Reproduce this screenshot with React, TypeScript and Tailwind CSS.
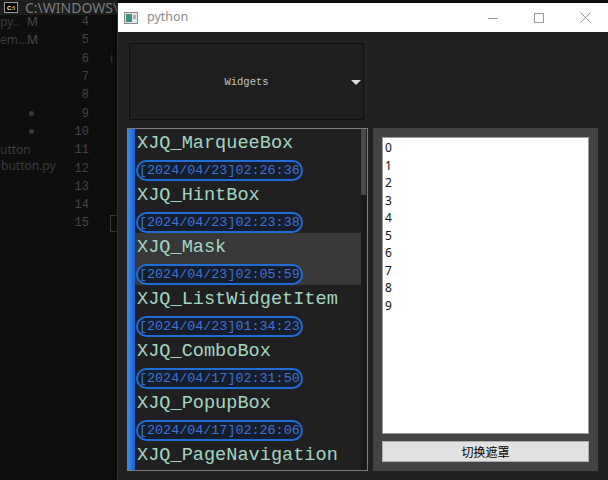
import React from 'react';

const items = [
  { name: 'XJQ_MarqueeBox', time: '[2024/04/23]02:26:36' },
  { name: 'XJQ_HintBox', time: '[2024/04/23]02:23:38' },
  { name: 'XJQ_Mask', time: '[2024/04/23]02:05:59', hover: true },
  { name: 'XJQ_ListWidgetItem', time: '[2024/04/23]01:34:23' },
  { name: 'XJQ_ComboBox', time: '[2024/04/17]02:31:50' },
  { name: 'XJQ_PopupBox', time: '[2024/04/17]02:26:06' },
  { name: 'XJQ_PageNavigation' },
];

const lineNumbers = [4, 5, 6, 7, 8, 9, 10, 11, 12, 13, 14, 15];

// explorer side text, keyed by line number
const explorer: Record<number, React.ReactNode> = {
  4: (
    <>
      <span className="w-[27px]">py..</span>
      <span className="text-[#4a4a4a]">M</span>
    </>
  ),
  5: (
    <>
      <span className="w-[27px]">em...</span>
      <span className="text-[#4a4a4a]">M</span>
    </>
  ),
  9: <span className="ml-[29px] w-[5px] h-[5px] rounded-full bg-[#3a3a3a]" />,
  10: <span className="ml-[29px] w-[5px] h-[5px] rounded-full bg-[#3a3a3a]" />,
  11: <span>utton</span>,
  12: <span className="-mt-[6px] pl-[1px]">button.py</span>,
};

const Background = () => (
  <div className="absolute inset-0 bg-[#0e0e0e]">
    <div className="flex pt-[13px]">
      <div className="w-[60px] flex flex-col text-[12px] leading-none text-[#3c3c3c]" style={{ fontFamily: '"Noto Sans", sans-serif' }}>
        {lineNumbers.map((n) => (
          <div key={n} className="h-[18.3px] flex items-center overflow-hidden whitespace-nowrap">
            {explorer[n]}
          </div>
        ))}
      </div>
      <div className="w-[29px] flex flex-col text-[12px] leading-none text-[#444444]" style={{ fontFamily: '"Liberation Mono", monospace' }}>
        {lineNumbers.map((n) => (
          <div key={n} className="h-[18.3px] flex items-center justify-end">{n}</div>
        ))}
      </div>
      <div className="flex flex-col pl-[21px]">
        {lineNumbers.map((n) => (
          <div key={n} className="h-[18.3px] flex items-center text-[12px] text-[#3a3a3a]">
            {n === 6 ? 'i' : n === 15 ? <span className="w-[10px] h-[17px] border border-[#3a3a3a]" /> : ''}
          </div>
        ))}
      </div>
    </div>
    <div className="absolute left-0 top-0 w-[117px] h-[15px] bg-[#1e1e1e] flex items-center gap-[7px] pl-[4px] overflow-hidden">
      <div className="shrink-0 w-[14px] h-[11px] border border-[#9a9a9a] bg-black flex items-center justify-center text-[6px] leading-none text-white font-bold" style={{ fontFamily: '"Liberation Sans", sans-serif' }}>
        C:\
      </div>
      <span className="text-[14px] leading-none text-[#7c7c7c] whitespace-nowrap" style={{ fontFamily: '"Noto Sans", sans-serif' }}>
        C:\WINDOWS\sy
      </span>
    </div>
  </div>
);

const TitleBar = () => (
  <div className="h-[29px] bg-white flex items-center" style={{ fontFamily: '"Noto Sans", sans-serif' }}>
    <svg width="14" height="12" viewBox="0 0 14 12" className="ml-[6px]">
      <rect x="0.5" y="0.5" width="13" height="11" fill="#e8e8e8" stroke="#8a8a8a" />
      <rect x="2" y="2" width="6" height="8" fill="#3f8f80" />
      <rect x="9" y="3" width="3" height="4" fill="#b0b0b0" />
    </svg>
    <span className="ml-[9px] text-[12.5px] text-[#8c8c8c]">python</span>
    <div className="ml-auto flex h-full">
      <div className="w-[46px] flex items-center justify-center">
        <svg width="10" height="10" viewBox="0 0 10 10">
          <line x1="0" y1="5.5" x2="10" y2="5.5" stroke="#9a9a9a" strokeWidth="1" />
        </svg>
      </div>
      <div className="w-[46px] flex items-center justify-center">
        <svg width="10" height="10" viewBox="0 0 10 10">
          <rect x="0.5" y="0.5" width="9" height="9" fill="none" stroke="#9a9a9a" strokeWidth="1" />
        </svg>
      </div>
      <div className="w-[46px] flex items-center justify-center">
        <svg width="11" height="11" viewBox="0 0 11 11">
          <path d="M0.5 0.5 L10.5 10.5 M10.5 0.5 L0.5 10.5" stroke="#9a9a9a" strokeWidth="1" />
        </svg>
      </div>
    </div>
  </div>
);

const ListItem = ({ name, time, hover }: { name: string; time?: string; hover?: boolean }) => (
  <div className={`h-[52px] shrink-0 flex flex-col ${hover ? 'bg-[#383838]' : ''}`}>
    <div className="h-[31px] pl-[2px] flex items-center text-[18.6px] leading-none text-[#a2d6c3] whitespace-nowrap">
      {name}
    </div>
    {time && (
      <div className="self-start ml-[1px] h-[21px] px-[1px] flex items-center rounded-full border-2 border-[#1e6cd6] bg-[#161d2b] text-[13.4px] leading-none text-[#3d74d6] whitespace-nowrap">
        {time}
      </div>
    )}
  </div>
);

const App: React.FC = () => {
  return (
    <div className="relative w-[608px] h-[480px] overflow-hidden">
      <Background />
      <div className="absolute left-[117px] top-[3px] w-[491px] h-[477px] flex flex-col border-l border-[#2e2e2e] shadow-[0_0_6px_rgba(0,0,0,0.6)]">
        <TitleBar />
        <div className="flex-1 bg-[#212121] pl-[9px] pt-[11px] flex flex-col gap-[8px]">
          <div className="ml-[2px] w-[235px] h-[77px] pt-[3px] bg-[#1e1e1e] border border-[#0f0f0f] relative flex items-center justify-center">
            <span className="text-[10.5px] text-[#c4c4c4]" style={{ fontFamily: '"Liberation Mono", monospace' }}>
              Widgets
            </span>
            <svg width="10" height="6" viewBox="0 0 10 6" className="absolute right-[2px] top-[36px]">
              <path d="M0 0 L10 0 L5 5 Z" fill="#dcdcdc" />
            </svg>
          </div>
          <div className="flex gap-[5px]">
            <div className="w-[241px] h-[343px] border border-[#7c7c7c] bg-[#202020] flex" style={{ fontFamily: '"Liberation Mono", monospace' }}>
              <div className="w-[7px] bg-gradient-to-r from-[#3d8ae6] to-[#1560d2]" />
              <div className="flex-1 flex flex-col overflow-hidden">
                {items.map((it) => (
                  <ListItem key={it.name} {...it} />
                ))}
              </div>
              <div className="w-[6px] bg-[#1a1a1a] flex flex-col">
                <div className="h-[66px] bg-[#4a4a4a] mr-[1px]" />
              </div>
            </div>
            <div className="w-[225px] h-[343px] bg-[#434343] p-[9px] flex flex-col gap-[7px]">
              <div className="h-[297px] bg-white border border-[#9c9c9c] pl-[2px] pt-[1px] text-[12px] text-[#111111]" style={{ fontFamily: '"Noto Sans", sans-serif' }}>
                {Array.from({ length: 10 }, (_, i) => (
                  <div key={i} className="h-[17.5px] leading-[17.5px]">{i}</div>
                ))}
              </div>
              <button
                className="h-[21px] bg-[#e1e1e1] border border-[#adadad] text-[12px] text-black flex items-center justify-center"
                style={{ fontFamily: '"Noto Sans CJK SC", sans-serif' }}
              >
                切换遮罩
              </button>
            </div>
          </div>
        </div>
      </div>
    </div>
  );
};

export default App;
